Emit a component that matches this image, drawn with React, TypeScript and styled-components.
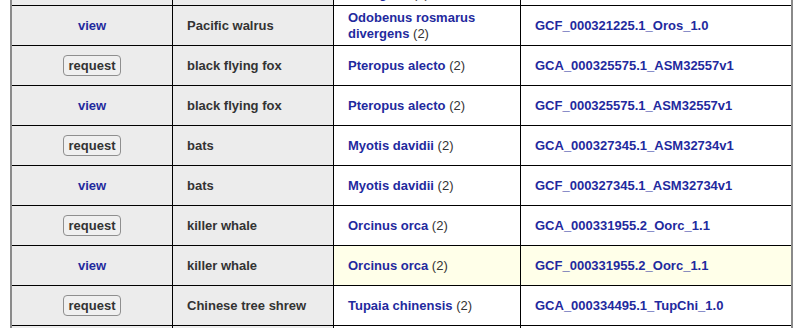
import React from 'react';
import styled, { createGlobalStyle } from 'styled-components';

const GlobalStyle = createGlobalStyle`
  html, body {
    margin: 0;
    padding: 0;
    background: #fff;
  }
  body {
    font-family: "Liberation Sans", Arial, Helvetica, sans-serif;
    font-size: 13px;
  }
`;

type Assembly = {
  kind: 'request' | 'view';
  common: string;
  species: string;
  accession: string;
  highlight?: boolean;
};

const rows: Assembly[] = [
  { kind: 'request', common: 'Pacific walrus', species: 'Odobenus rosmarus divergens', accession: 'GCA_000321225.1_Oros_1.0' },
  { kind: 'view', common: 'Pacific walrus', species: 'Odobenus rosmarus divergens', accession: 'GCF_000321225.1_Oros_1.0' },
  { kind: 'request', common: 'black flying fox', species: 'Pteropus alecto', accession: 'GCA_000325575.1_ASM32557v1' },
  { kind: 'view', common: 'black flying fox', species: 'Pteropus alecto', accession: 'GCF_000325575.1_ASM32557v1' },
  { kind: 'request', common: 'bats', species: 'Myotis davidii', accession: 'GCA_000327345.1_ASM32734v1' },
  { kind: 'view', common: 'bats', species: 'Myotis davidii', accession: 'GCF_000327345.1_ASM32734v1' },
  { kind: 'request', common: 'killer whale', species: 'Orcinus orca', accession: 'GCA_000331955.2_Oorc_1.1' },
  { kind: 'view', common: 'killer whale', species: 'Orcinus orca', accession: 'GCF_000331955.2_Oorc_1.1', highlight: true },
  { kind: 'request', common: 'Chinese tree shrew', species: 'Tupaia chinensis', accession: 'GCA_000334495.1_TupChi_1.0' },
  { kind: 'view', common: 'Chinese tree shrew', species: 'Tupaia chinensis', accession: 'GCF_000334495.1_TupChi_1.0' },
];

const Viewport = styled.div`
  height: 328px;
  overflow: hidden;
`;

const Frame = styled.div`
  margin-left: 10px;
  width: 783px;
  height: 328px;
  box-sizing: border-box;
  border-left: 2px solid #8a8a8a;
  border-right: 2px solid #8a8a8a;
  overflow: hidden;
`;

// the list is scrolled a little, so the first row is cut at the top
const Table = styled.div`
  margin-top: -34px;
`;

const Row = styled.div`
  display: grid;
  grid-template-columns: 160px 161px 187px 271px;
  height: 40px;
  box-sizing: border-box;
  border-bottom: 1px solid #000;
`;

const Cell = styled.div<{ $shade?: 'grey' | 'white' | 'yellow'; $center?: boolean }>`
  display: flex;
  align-items: center;
  justify-content: ${p => (p.$center ? 'center' : 'flex-start')};
  padding: 0 14px;
  box-sizing: border-box;
  line-height: 16px;
  font-weight: bold;
  color: #333;
  background: ${p =>
    p.$shade === 'grey' ? '#ececec' : p.$shade === 'yellow' ? '#ffffe9' : '#fff'};
  & + & {
    border-left: 1px solid #000;
  }
`;

const Link = styled.a`
  color: #1f2a9e;
  font-weight: bold;
  text-decoration: none;
  cursor: pointer;
`;

const Count = styled.span`
  font-weight: normal;
  color: #333;
`;

const RequestButton = styled.button`
  font-family: inherit;
  font-size: 13px;
  font-weight: bold;
  line-height: 15px;
  color: #333;
  background: #f0f0f0;
  border: 1px solid #8f8f8f;
  border-radius: 4px;
  padding: 2px 5px;
  margin: 0;
  cursor: pointer;
`;

const AssemblyRow = ({ row }: { row: Assembly }) => {
  const shade = row.highlight ? 'yellow' : 'white';
  return (
    <Row>
      <Cell $shade="grey" $center>
        {row.kind === 'request' ? <RequestButton>request</RequestButton> : <Link>view</Link>}
      </Cell>
      <Cell $shade="grey">{row.common}</Cell>
      <Cell $shade={shade}>
        <div>
          <Link>{row.species}</Link> <Count>(2)</Count>
        </div>
      </Cell>
      <Cell $shade={shade}>
        <Link>{row.accession}</Link>
      </Cell>
    </Row>
  );
};

export default function App() {
  return (
    <Viewport>
      <GlobalStyle />
      <Frame>
        <Table>
          {rows.map((r, i) => (
            <AssemblyRow key={i} row={r} />
          ))}
        </Table>
      </Frame>
    </Viewport>
  );
}
